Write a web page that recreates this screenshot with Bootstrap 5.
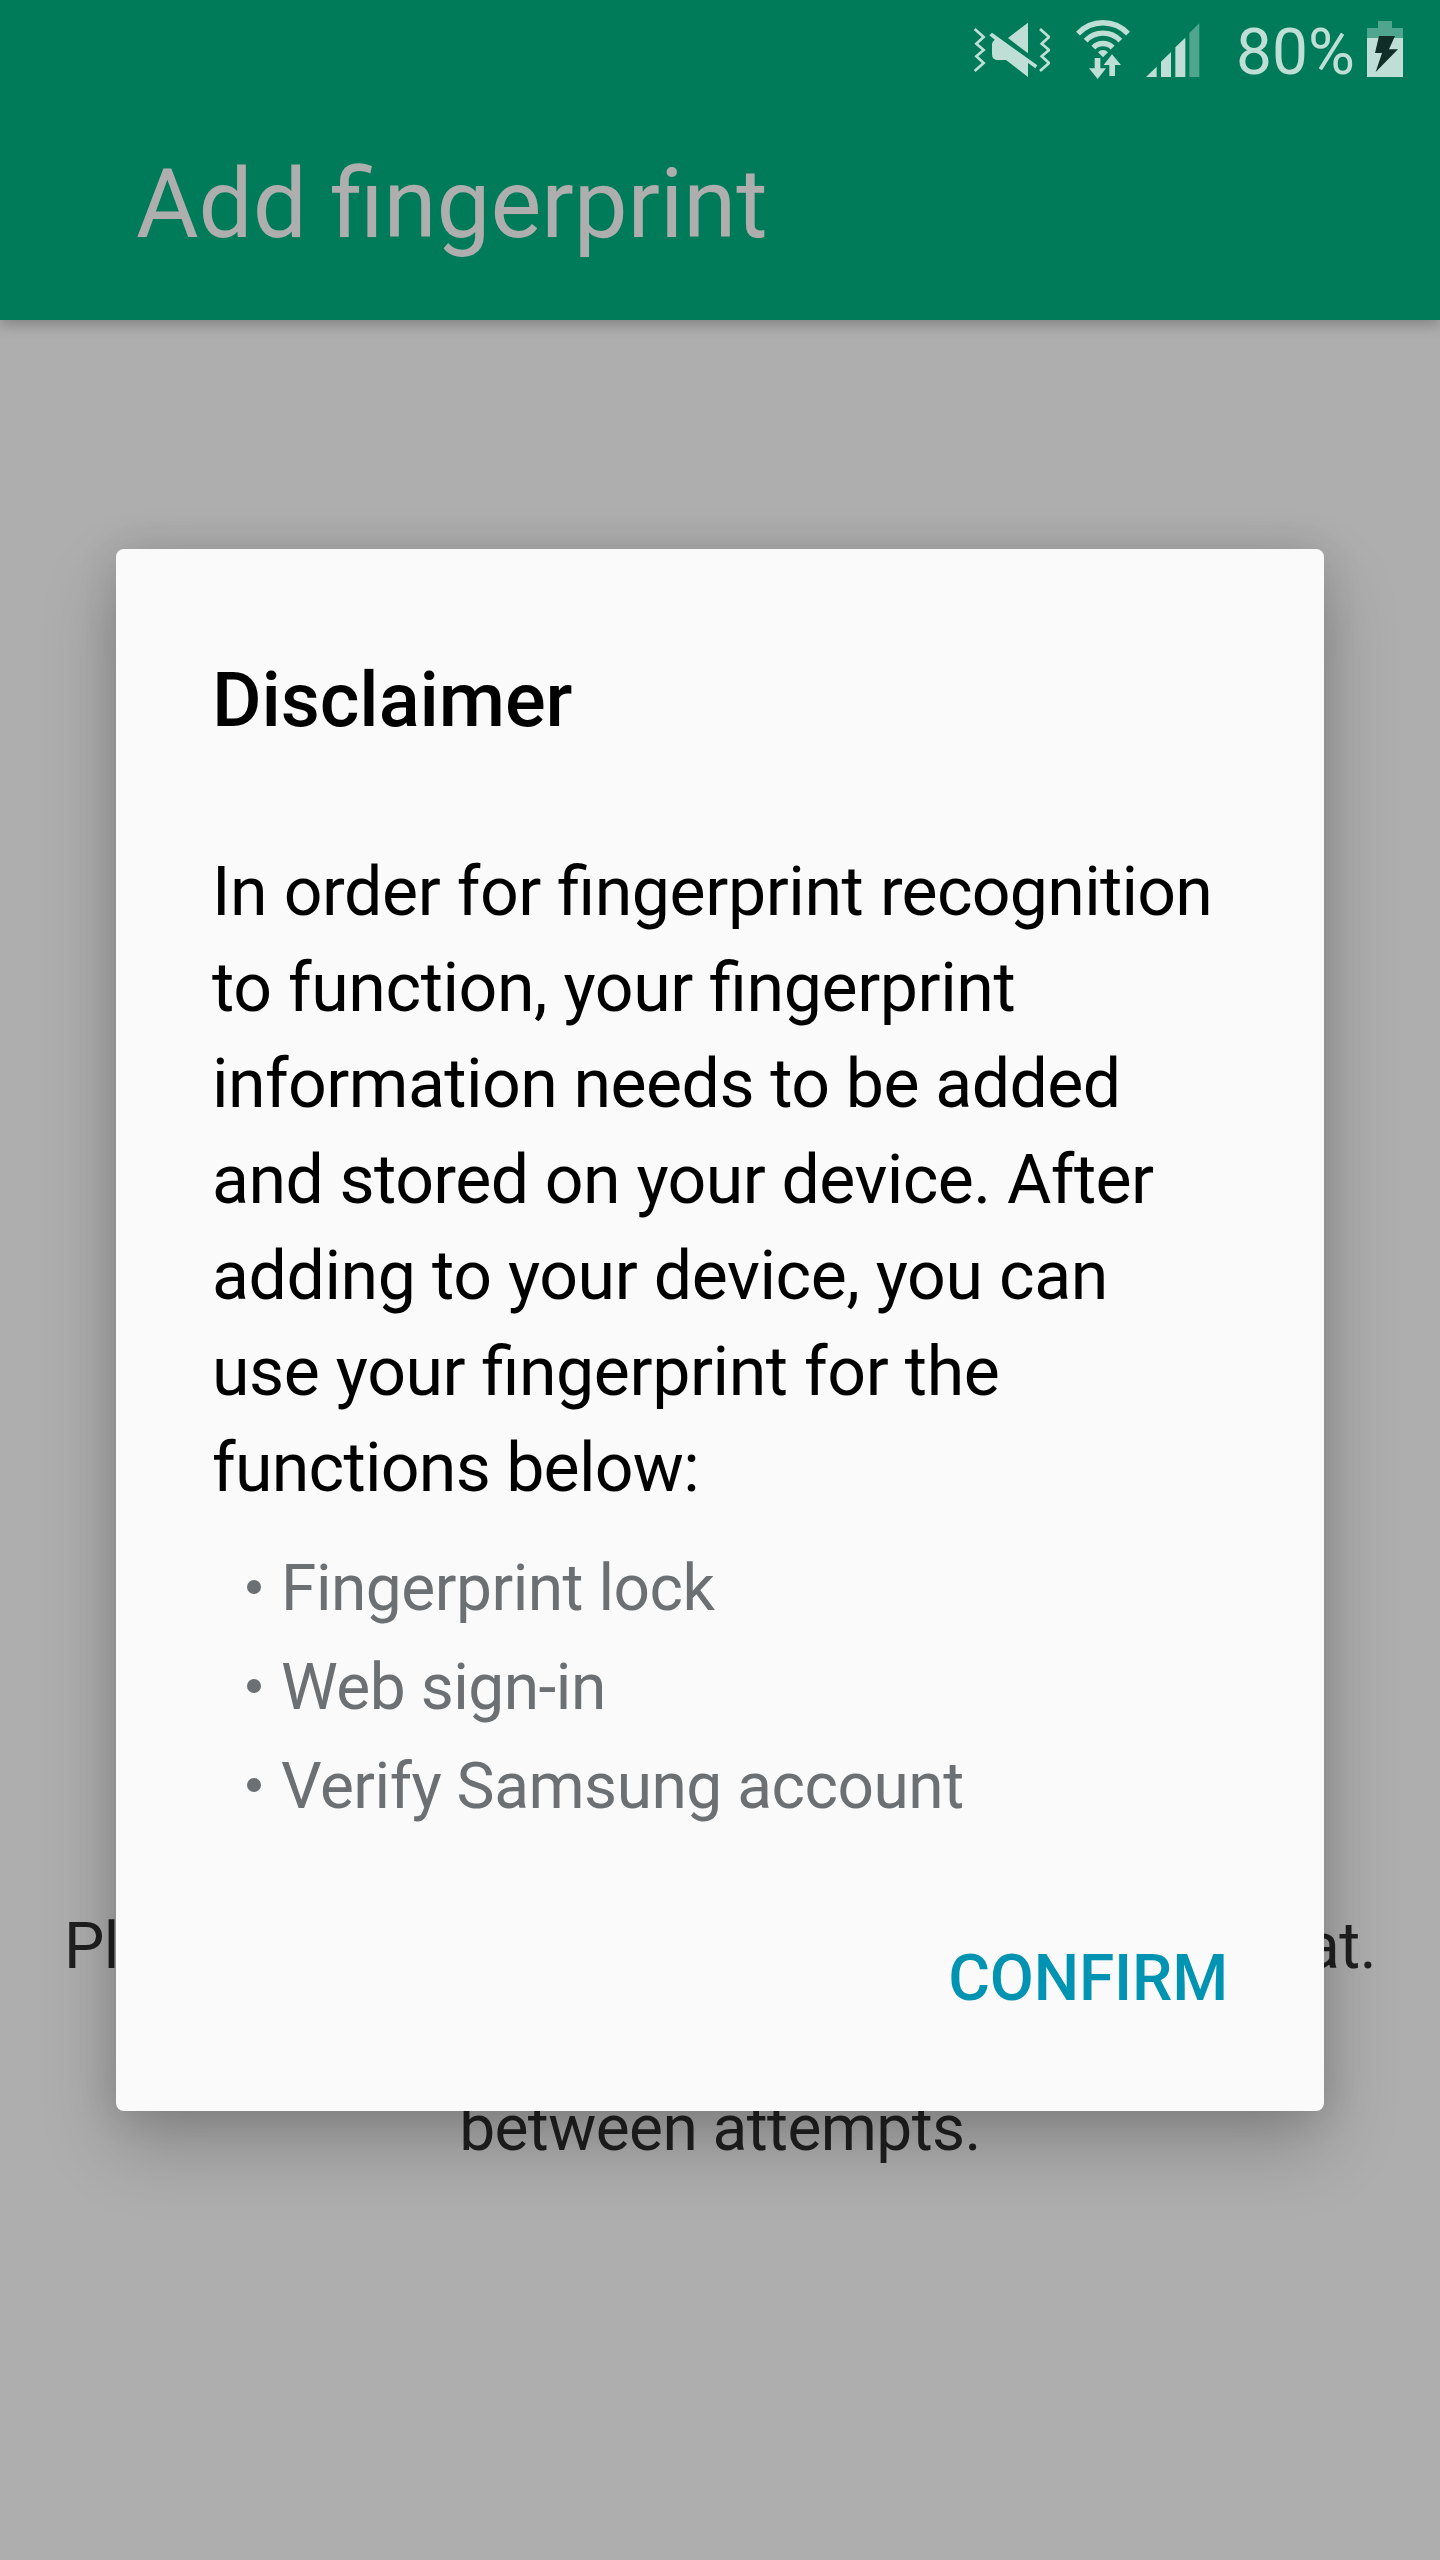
<!DOCTYPE html>
<html lang="en">
<head>
<meta charset="utf-8">
<meta name="viewport" content="width=device-width, initial-scale=1">
<title>Add fingerprint</title>
<link href="https://cdn.jsdelivr.net/npm/bootstrap@5.3.0/dist/css/bootstrap.min.css" rel="stylesheet">
<style>
body { font-family: Roboto, "Liberation Sans", sans-serif; background: #aeaeae; font-feature-settings: "liga" 1; }
.screen { width: 1440px; height: 2560px; background: #aeaeae; }
.app-header { height: 320px; background: #007b5a; box-shadow: 0 4px 14px rgba(0,0,0,.28); }
.status-bar { height: 148px; padding: 5px 37px 0 0; }
.status-bar svg { height: 60px; margin-top: 15px; fill: #bfded6; flex: none; }
.status-bar .wave { fill: none; stroke: #bfded6; }
.status-bar .faint { fill: #4fa58d; }
.ic-mute { width: 76px; margin-right: 25px; }
.ic-wifi { width: 56px; margin-right: 15px; }
.ic-signal { width: 54px; }
.ic-battery { width: 36px; }
.battery-text { width: 131px; margin-left: 36px; font-size: 64px; line-height: 96px; color: #bfded6; }
.app-title { font-size: 96px; line-height: 112px; color: #aeaeae; padding-left: 136px; font-weight: 400; letter-spacing: -.06px; }
.hint { padding: 1581px 64px 0 64px; font-size: 64px; line-height: 91px; color: #202020; letter-spacing: -.58px; }
.hint-last { margin-top: 91px; }
.dialog-box { left: 116px; top: 549px; width: 1208px; height: 1562px; padding: 103px 96px 84px; background: #fafafa; border-radius: 8px; color: #000;
  box-shadow: 0 34px 74px rgba(0,0,0,.22), 0 2px 40px rgba(0,0,0,.12); }
.dialog-heading { font-size: 76px; line-height: 96px; font-weight: 500; margin-bottom: 96px; letter-spacing: -.1px; }
.dialog-copy { font-size: 68px; line-height: 96px; margin-bottom: 23px; letter-spacing: -.41px; white-space: nowrap; }
.dialog-copy .tight { letter-spacing: -.55px; }
.dialog-copy .tighter { letter-spacing: -.72px; }
.feature-list { font-size: 64px; line-height: 99px; color: #6c7073; margin-bottom: 95px; padding-left: 35px; letter-spacing: -.48px; }
.feature-list li::before { content: ""; width: 14px; height: 14px; border-radius: 50%; background: #6c7073; margin: 0 20px 4px 0; }
.confirm-btn { font-size: 64px; line-height: 96px; font-weight: 500; color: #0093b2; border: 0; letter-spacing: -.15px; }
</style>
<script src="https://cdn.jsdelivr.net/npm/bootstrap@5.3.0/dist/js/bootstrap.bundle.min.js"></script>
</head>
<body>
<div class="screen position-relative overflow-hidden">
  <header class="app-header">
    <div class="status-bar d-flex justify-content-end align-items-start">
      <svg class="ic-mute" viewBox="42 60 228 180">
        <path class="wave" stroke-width="8" d="M44 87L71 111L49 131L71 150L49 169L71 189L44 213M240 87L267 111L245 131L267 150L245 169L267 189L240 213"/>
        <path d="M144 114L204 68V160Z"/>
        <path d="M88 106L96 98L232 196L226 205L204 189V231L138 180H113Q96 180 96 162V132Q96 126 104 119Z"/>
      </svg>
      <svg class="ic-wifi" viewBox="345 60 168 180">
        <path class="wave" stroke-width="16" d="M354 101A102 102 0 0 1 504 101M377 122A71 71 0 0 1 481 122M400 143A40 40 0 0 1 458 143"/>
        <path d="M414 157A20 20 0 0 1 444 157L429 172Z"/>
        <path d="M404 174H421V205H438L413 237L387 205H404ZM456 163L483 195H465V228H448V195H431Z"/>
      </svg>
      <svg class="ic-signal" viewBox="558 60 162 180">
        <path d="M558 231L590 200V231ZM603 231V185L633 156V231ZM646 231V142L676 113V231Z"/>
        <path class="faint" d="M688 231V99L718 70V231Z"/>
      </svg>
      <span class="battery-text">80%</span>
      <svg class="ic-battery" viewBox="501 60 108 180">
        <path class="faint" d="M534 63H576V84H609V114H501V84H534Z"/>
        <path d="M501 114H609V231H501Z"/>
        <path fill="#102e27" d="M537 108H585L567 148H594L527 216L546 159H525Z"/>
      </svg>
    </div>
    <h1 class="app-title m-0">Add fingerprint</h1>
  </header>

  <main class="hint">
    <div class="d-flex justify-content-between"><span>Pl</span><span>at.</span></div>
    <div class="hint-last text-center">between attempts.</div>
  </main>

  <section class="dialog-box position-absolute d-flex flex-column" role="dialog" aria-labelledby="dlg-heading">
    <h2 class="dialog-heading" id="dlg-heading">Disclaimer</h2>
    <p class="dialog-copy">In order for fingerprint <span class="tighter">recognition</span><br>to function, your fingerprint<br><span class="tight">information needs to be added<br>and stored on your device. After</span><br>adding to your device, you can<br>use your fingerprint for the<br><span class="tighter">functions below:</span></p>
    <ul class="feature-list list-unstyled">
      <li class="d-flex align-items-center">Fingerprint lock</li>
      <li class="d-flex align-items-center">Web sign-in</li>
      <li class="d-flex align-items-center">Verify Samsung account</li>
    </ul>
    <button class="confirm-btn btn p-0 align-self-end" type="button">CONFIRM</button>
  </section>
</div>
</body>
</html>
